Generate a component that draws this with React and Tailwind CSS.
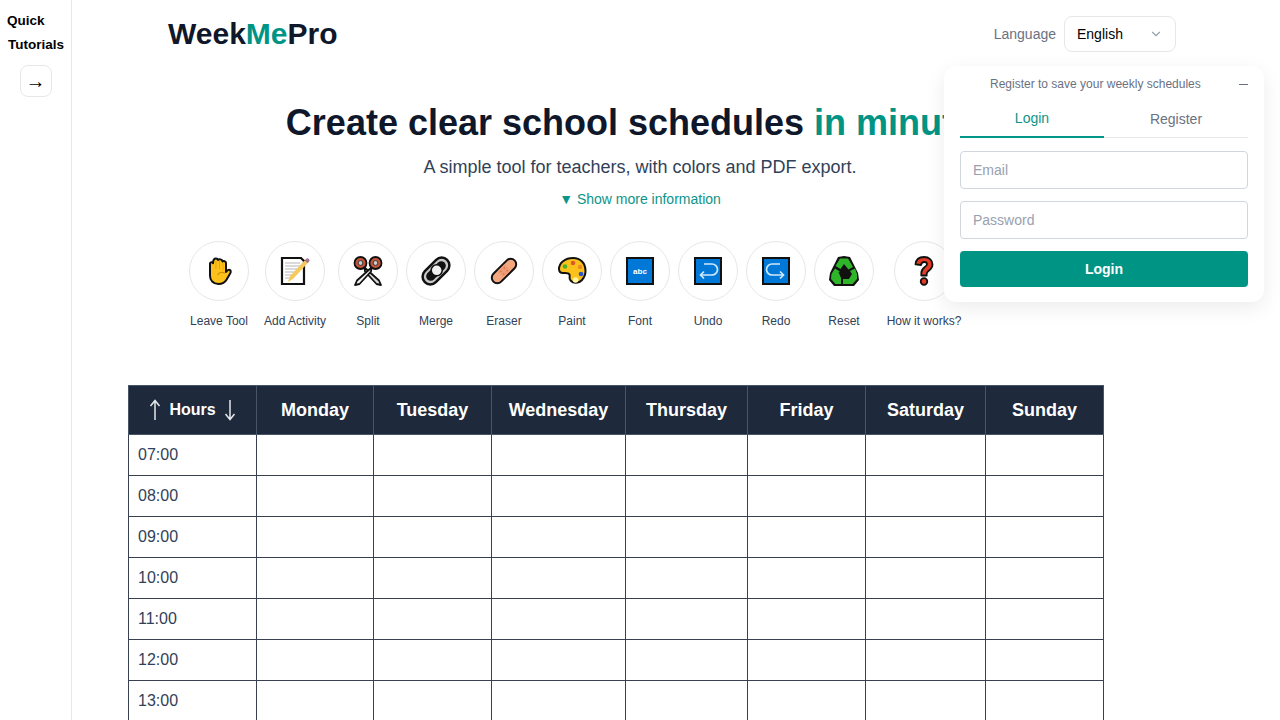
import { ChevronDown } from 'lucide-react'

const FONT = "font-['Liberation_Sans',Arial,sans-serif]"

function Hand() {
  return (
    <svg width="32" height="32" viewBox="0 0 32 32">
      <path d="M7 17V8.500c0-1.500 2.600-1.800 3-.2 0-2.800 1-4.800 3-4.800 1.200 0 1.800.6 2 1.500.8-1.200 4.500-1 4.500 1.500.8-.8 3.500-.5 3.500 1.500V17c1-1.500 2.200-2.700 3.800-2 1.500.8 1 2.500.2 3.800l-3.500 6C22 27.500 19.500 29 15.500 29 10 29 7 25 7 21z" fill="#fcc21b" stroke="#111" strokeWidth="2" strokeLinejoin="round" />
      <path d="M13 6v8M16.500 6v8M20 8v7" stroke="#e5a50a" strokeWidth="1" />
      <path d="M22 18c-3-1-6-.5-7.500 2" fill="none" stroke="#d08f05" strokeWidth="1.200" />
    </svg>
  )
}

function Memo() {
  return (
    <svg width="32" height="32" viewBox="0 0 32 32">
      <path d="M3 3h19l3 3v23H3z" fill="#fff" stroke="#111" strokeWidth="2.200" />
      <path d="M6 8h15M6 11h17M6 14h15M6 17h12M6 20h8M6 23h6" stroke="#b5b5b5" strokeWidth="1.200" />
      <path d="M9 27l2-6L25.500 5.500l3 2.800L14 24z" fill="#f6c95c" />
      <path d="M25.500 5.500l1.500-1.500a2 2 0 0 1 3 2.800l-1.500 1.500z" fill="#a8768c" />
    </svg>
  )
}

function Scissors() {
  return (
    <svg width="32" height="32" viewBox="0 0 32 32">
      <path d="M12.500 12.500L27 25.500 29 30 24.500 29 13 16.500z" fill="#d8d8d8" stroke="#111" strokeWidth="1.800" strokeLinejoin="round" />
      <path d="M19.500 12.500L5 25.500 3 30 7.500 29 19 16.500z" fill="#f2f2f2" stroke="#111" strokeWidth="1.800" strokeLinejoin="round" />
      <circle cx="8.500" cy="8" r="6" fill="#c8553a" stroke="#111" strokeWidth="1.800" />
      <circle cx="23.500" cy="8" r="6" fill="#c8553a" stroke="#111" strokeWidth="1.800" />
      <circle cx="8.500" cy="8" r="2.400" fill="#cfcfcf" stroke="#333" strokeWidth="1" />
      <circle cx="23.500" cy="8" r="2.400" fill="#cfcfcf" stroke="#333" strokeWidth="1" />
    </svg>
  )
}

function Clip() {
  return (
    <svg width="32" height="32" viewBox="0 0 32 32">
      <g transform="rotate(-45 16 16)">
        <rect x="-1" y="7" width="34" height="18" rx="9" fill="#111" />
        <rect x="1.500" y="9.500" width="29" height="13" rx="6.500" fill="#c9c9c9" />
        <rect x="4" y="11.500" width="24" height="9" rx="4.500" fill="#111" />
        <circle cx="17" cy="16" r="5.500" fill="#f0f0f0" stroke="#111" strokeWidth="1.500" />
      </g>
    </svg>
  )
}

function Bandage() {
  return (
    <svg width="32" height="32" viewBox="0 0 32 32">
      <g transform="rotate(-45 16 16)">
        <rect x="1" y="10.500" width="30" height="11" rx="5.500" fill="#f4a77f" stroke="#111" strokeWidth="2" />
        <rect x="11" y="11.500" width="10" height="9" fill="#ee9a72" />
        <circle cx="13.500" cy="14" r=".8" fill="#c97a55" />
        <circle cx="18.500" cy="14" r=".8" fill="#c97a55" />
        <circle cx="13.500" cy="18" r=".8" fill="#c97a55" />
        <circle cx="18.500" cy="18" r=".8" fill="#c97a55" />
      </g>
    </svg>
  )
}

function Palette() {
  return (
    <svg width="32" height="32" viewBox="0 0 32 32">
      <path d="M17 3C9 3 3 8 3 14c0 3 2 4 4 4 3 0 5.500-.5 6.500 1.500.8 2-1 3.500 1 6 3 3.200 8.500 3 11.500-.5 2.500-2.800 3.500-6 3.500-9C29.500 8 24.500 3 17 3z" fill="#fcc21b" stroke="#111" strokeWidth="2" strokeLinejoin="round" />
      <circle cx="9" cy="11.500" r="2.300" fill="#4caf2f" />
      <circle cx="17" cy="8" r="2.300" fill="#e0592a" />
      <circle cx="24" cy="12" r="2.300" fill="#f08a24" />
      <circle cx="25" cy="19" r="2.300" fill="#2b55c4" />
      <circle cx="19.500" cy="25" r="2.800" fill="#fff6a8" />
    </svg>
  )
}

function BlueBox({ children }) {
  return (
    <svg width="28" height="28" viewBox="0 0 28 28">
      <rect x="1" y="1" width="26" height="26" fill="#0078d7" stroke="#111" strokeWidth="2" />
      {children}
    </svg>
  )
}

function Recycle() {
  return (
    <svg width="32" height="32" viewBox="0 0 32 32">
      <path d="M16 1l6 1 8 16 1 7-5 6H6l-5-6 1-7 8-16z" fill="#111" />
      <path d="M12 3.500h8l5 8.500-4.500 2.500L16 9l-3.500 5-5-3z" fill="#2fb52a" />
      <path d="M7 13.500l5 3-1.500.5 2.500 6v6H7.500L3 24l.5-5z" fill="#2fb52a" />
      <path d="M22 16l5-2.500 2 5.500v5l-4.500 5H15v-5h6l3-5z" fill="#2fb52a" />
    </svg>
  )
}

function Question() {
  return (
    <svg width="32" height="32" viewBox="0 0 32 32">
      <path d="M16 2c5 0 8.500 3 8.500 7.500 0 3.500-2 5-4 6.500-1.300 1-1.800 1.500-1.800 3v1.500h-5.400V18c0-3 1.500-4.500 3.200-5.800 1.500-1.200 2.500-1.700 2.500-3 0-1.300-1-2.200-2.700-2.200-1.800 0-3 1.200-3.300 3l-5.500-.7C8 4.500 11 2 16 2z" fill="#e33b26" stroke="#111" strokeWidth="1.800" strokeLinejoin="round" />
      <circle cx="16" cy="26.500" r="3.300" fill="#e33b26" stroke="#111" strokeWidth="1.800" />
    </svg>
  )
}

function VArrow({ down }) {
  return (
    <svg width="12" height="22" viewBox="0 0 12 22" className={down ? 'rotate-180' : ''}>
      <path d="M6 21V2M1.500 7L6 1.500 10.500 7" fill="none" stroke="#e5e7eb" strokeWidth="1.500" />
    </svg>
  )
}

const TOOLS = [
  { label: 'Leave Tool', w: 'w-[66px]', icon: <Hand /> },
  { label: 'Add Activity', w: 'w-[70px]', icon: <Memo /> },
  { label: 'Split', w: 'w-[60px]', icon: <Scissors /> },
  { label: 'Merge', w: 'w-[60px]', icon: <Clip /> },
  { label: 'Eraser', w: 'w-[60px]', icon: <Bandage /> },
  { label: 'Paint', w: 'w-[60px]', icon: <Palette /> },
  { label: 'Font', w: 'w-[60px]', icon: <BlueBox><text x="14" y="17" textAnchor="middle" fontSize="8" fontWeight="700" fill="#fff" fontFamily="Liberation Sans">abc</text></BlueBox> },
  { label: 'Undo', w: 'w-[60px]', icon: <BlueBox><path d="M10 7h8a5.500 5.500 0 0 1 0 11H6.500m3.500-3.500L6.500 18l3.500 3.500" fill="none" stroke="#cfe8fb" strokeWidth="1.700" /></BlueBox> },
  { label: 'Redo', w: 'w-[60px]', icon: <BlueBox><path d="M18 7h-8a5.500 5.500 0 0 0 0 11h11.500M18 14.500l3.500 3.500-3.500 3.500" fill="none" stroke="#cfe8fb" strokeWidth="1.700" /></BlueBox> },
  { label: 'Reset', w: 'w-[60px]', icon: <Recycle /> },
  { label: 'How it works?', w: 'w-[84px]', icon: <Question /> },
]

const DAYS = ['Monday', 'Tuesday', 'Wednesday', 'Thursday', 'Friday', 'Saturday', 'Sunday']
const HOURS = ['07:00', '08:00', '09:00', '10:00', '11:00', '12:00', '13:00']

function Tool({ tool }) {
  return (
    <div className={`flex ${tool.w} flex-col items-center`}>
      <div className="flex h-[60px] w-[60px] items-center justify-center rounded-full border border-gray-200 bg-white">
        {tool.icon}
      </div>
      <span className="mt-3 whitespace-nowrap text-xs leading-4 text-slate-700">{tool.label}</span>
    </div>
  )
}

function LoginPanel() {
  return (
    <div className="absolute left-[944px] top-[66px] h-[236px] w-[320px] rounded-xl bg-white px-4 shadow-[0_6px_20px_rgba(0,0,0,0.08)]">
      <div className="flex h-9 items-center">
        <p className="flex-1 pl-[30px] text-xs text-gray-500">Register to save your weekly schedules</p>
        <span className="h-px w-[9px] bg-gray-500" />
      </div>
      <div className="flex h-9 border-b border-gray-200 text-sm">
        <div className="flex h-9 flex-1 items-center justify-center border-b-2 border-teal-600 pb-0.5 text-[#0d9488]">Login</div>
        <div className="flex flex-1 items-center justify-center pb-0.5 text-gray-500">Register</div>
      </div>
      <input placeholder="Email" className="mt-[13px] block h-[38px] w-full rounded border border-gray-300 px-3 text-sm placeholder:text-gray-400" />
      <input placeholder="Password" className="mt-3 block h-[38px] w-full rounded border border-gray-300 px-3 text-sm placeholder:text-gray-400" />
      <button className="mt-3 h-9 w-full rounded bg-[#009485] text-sm font-bold text-white">Login</button>
    </div>
  )
}

export default function App() {
  return (
    <div className={`${FONT} relative flex h-screen overflow-hidden bg-white`}>
      {/* sidebar */}
      <aside className="flex w-[72px] shrink-0 flex-col items-center border-r border-gray-200 pt-[9px]">
        <p className="w-full pl-[7px] text-[13.5px] font-bold leading-6 text-black">Quick</p>
        <p className="w-full pl-[8px] text-[13.5px] font-bold leading-6 text-black">Tutorials</p>
        <button className="mt-[8px] flex h-8 w-8 items-center justify-center rounded-lg border border-gray-200 text-xl leading-none text-black">→</button>
      </aside>

      <main className="relative w-[1136px] shrink-0">
        {/* top bar */}
        <header className="flex h-[68px] items-center pl-24 pr-8">
          <h1 className="text-3xl font-bold text-[#0f172a]">Week<span className="text-[#009485]">Me</span>Pro</h1>
          <div className="ml-auto flex items-center gap-2">
            <span className="text-sm text-gray-500">Language</span>
            <div className="flex h-9 w-[112px] items-center justify-between rounded-lg border border-gray-200 px-3 text-sm text-black">
              English
              <ChevronDown size={14} className="text-gray-400" />
            </div>
          </div>
        </header>

        {/* hero */}
        <div className="mt-[33px] flex flex-col items-center">
          <h2 className="whitespace-nowrap text-4xl font-bold leading-[44px] text-[#0f172a]">Create clear school schedules <span className="text-[#009485]">in minutes</span></h2>
          <p className="mt-2.5 text-lg leading-6 text-slate-700">A simple tool for teachers, with colors and PDF export.</p>
          <p className="mt-2 text-sm leading-6 text-[#0d9488]">▼ Show more information</p>
        </div>

        {/* toolbar */}
        <div className="ml-[114px] mt-[30px] flex gap-2">
          {TOOLS.map((t) => <Tool key={t.label} tool={t} />)}
        </div>

        {/* schedule table */}
        <table className="ml-[56px] mt-[56px] w-[975px] table-fixed border-collapse">
          <colgroup>
            <col className="w-[128px]" />
            <col className="w-[117px]" />
            <col className="w-[118px]" />
            <col className="w-[134px]" />
            <col className="w-[122px]" />
            <col className="w-[118px]" />
            <col className="w-[120px]" />
            <col className="w-[118px]" />
          </colgroup>
          <thead>
            <tr className="h-[49px] bg-[#1e293b] text-white">
              <th className="border border-[#475569] text-base">
                <span className="flex items-center justify-center gap-2">
                  <VArrow />
                  Hours
                  <VArrow down />
                </span>
              </th>
              {DAYS.map((d) => <th key={d} className="border border-[#475569] text-lg">{d}</th>)}
            </tr>
          </thead>
          <tbody>
            {HOURS.map((h) => (
              <tr key={h} className="h-[41px]">
                <td className="border border-[#374151] pl-[9px] text-base text-slate-700">{h}</td>
                {DAYS.map((d) => <td key={d} className="border border-[#374151]" />)}
              </tr>
            ))}
          </tbody>
        </table>
      </main>

      <LoginPanel />
    </div>
  )
}
